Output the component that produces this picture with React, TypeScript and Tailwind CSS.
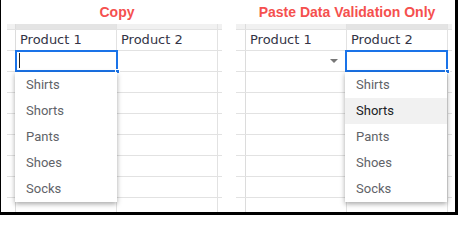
import React from 'react'

const items = ['Shirts', 'Shorts', 'Pants', 'Shoes', 'Socks']

function Row({
  lead,
  head,
  tall,
  band,
  cells,
}: {
  lead: number
  head: number
  tall?: boolean
  band?: boolean
  cells: React.ReactNode[]
}) {
  return (
    <div className="flex">
      <div style={{ width: lead }} className="shrink-0" />
      <div
        className={
          'flex border-b border-[#e2e2e2] ' +
          (band ? 'h-[6px] bg-[#f1f1f1]' : tall ? 'h-[21px]' : 'h-[21px]')
        }
      >
        <div style={{ width: head }} className="shrink-0 border-r border-[#dcdcdc]" />
        {cells.map((c, i) => (
          <div
            key={i}
            className={
              'w-[101px] shrink-0 border-r border-[#e2e2e2] ' +
              (band && i === 0 && lead < 8 ? 'bg-[#e4e4e4]' : '') +
              (band && i === 1 && lead >= 8 ? 'bg-[#e4e4e4]' : '')
            }
          >
            {c}
          </div>
        ))}
        <div className="w-[4px] shrink-0" />
      </div>
    </div>
  )
}

function Header({ text }: { text: string }) {
  return (
    <div className="h-full flex items-center pl-[4px] text-[13px] text-[#333446] font-['DejaVu_Sans',sans-serif]">
      {text}
    </div>
  )
}

function Sheet({
  title,
  lead,
  head,
  arrow,
}: {
  title: string
  lead: number
  head: number
  arrow?: boolean
}) {
  const blank = Array.from({ length: 8 })
  return (
    <div className="flex flex-col">
      <div className="flex h-[24px]">
        <div style={{ width: lead + head }} className="shrink-0" />
        <div className="w-[202px] flex items-center justify-center pt-[1px] text-[14px] font-bold text-[#f5504e] font-['Liberation_Sans',Arial,sans-serif]">
          {title}
        </div>
      </div>
      <Row lead={lead} head={head} band cells={[null, null]} />
      <Row
        lead={lead}
        head={head}
        cells={[<Header key="a" text="Product 1" />, <Header key="b" text="Product 2" />]}
      />
      {blank.map((_, i) => (
        <Row
          key={i}
          lead={lead}
          head={head}
          cells={[
            i === 0 && arrow ? (
              <div key="a" className="h-full flex items-center justify-end pr-[8px]">
                <div className="w-0 h-0 border-l-[4px] border-r-[4px] border-t-[4px] border-l-transparent border-r-transparent border-t-[#777777]" />
              </div>
            ) : null,
            null,
          ]}
        />
      ))}
    </div>
  )
}

function Dropdown({ left, hover }: { left: string; hover?: number }) {
  return (
    <div
      className={
        'absolute top-[72px] w-[102px] bg-white shadow-[0_2px_5px_rgba(0,0,0,0.35)] font-[Roboto,sans-serif] text-[13px] ' +
        left
      }
    >
      {items.map((t, i) => (
        <div
          key={t}
          className={
            'h-[26px] flex items-center pl-[11px] ' +
            (i === hover ? 'bg-[#f1f1f1] text-[#202124]' : 'text-[#5f6368]')
          }
        >
          {t}
        </div>
      ))}
    </div>
  )
}

function Selection({ left, cursor }: { left: string; cursor?: boolean }) {
  return (
    <div
      className={
        'absolute top-[50px] w-[103px] h-[22px] border-2 border-[#1a73e8] ' + left
      }
    >
      {cursor && <div className="absolute left-[2px] top-[1px] w-[1px] h-[15px] bg-[#222222]" />}
      <div className="absolute right-[-4px] bottom-[-4px] w-[5px] h-[5px] bg-[#1a73e8] border border-white" />
    </div>
  )
}

export default function App() {
  return (
    <div className="relative w-[458px] h-[215px] overflow-hidden bg-white border-l border-r-[3px] border-b-[3px] border-black flex">
      <div className="w-[225px] shrink-0 overflow-hidden">
        <Sheet title="Copy" lead={6} head={9} />
      </div>
      <div className="w-[229px] shrink-0 overflow-hidden">
        <Sheet title="Paste Data Validation Only" lead={10} head={10} arrow />
      </div>
      <Selection left="left-[14px]" cursor />
      <Selection left="left-[344px]" />
      <Dropdown left="left-[14px]" />
      <Dropdown left="left-[344px]" hover={1} />
    </div>
  )
}
